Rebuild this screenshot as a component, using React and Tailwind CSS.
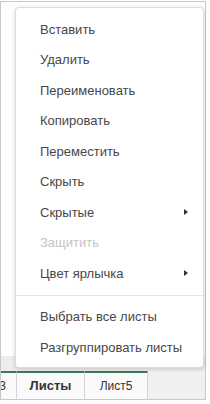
import React from "react";

const items = [
  { t: "Вставить" },
  { t: "Удалить" },
  { t: "Переименовать" },
  { t: "Копировать" },
  { t: "Переместить" },
  { t: "Скрыть" },
  { t: "Скрытые", sub: true },
  { t: "Защитить", disabled: true },
  { t: "Цвет ярлычка", sub: true },
];

function Row({ t, sub, disabled }) {
  return (
    <div
      className={
        "h-[30.5px] flex items-center pl-[24px] pr-[15px] justify-between " +
        (disabled ? "text-[#c4c4c4]" : "text-[#474747]")
      }
    >
      <span>{t}</span>
      {sub && (
        <svg width="4" height="6" viewBox="0 0 4 6">
          <path d="M0 0 L4 3 L0 6 Z" fill="#333" />
        </svg>
      )}
    </div>
  );
}

export default function App() {
  return (
    <div
      className="relative w-[210px] h-[404px] bg-white"
      style={{ fontFamily: '"Liberation Sans", Arial, sans-serif' }}
    >
      <div className="mt-[1px] w-[206px] h-[399px] border border-[#c8c8c8] flex flex-col">
        <div className="flex-1 bg-white" />
        <div className="h-[15px] bg-[#ededed]" />
        <div className="h-[28px] flex bg-[#f0f0f0] text-[12px] text-[#333]">
          <div className="w-[16px] bg-[#fafafa] border-t-[2px] border-[#3f7a56] border-r border-r-[#d4d4d4] flex items-center justify-end overflow-hidden">
            <span className="pr-[10px]">3</span>
          </div>
          <div className="w-[68px] bg-[#fafafa] border-t-[2px] border-[#3f7a56] border-r border-r-[#d4d4d4] flex items-center justify-center font-bold text-[13px]">
            Листы
          </div>
          <div className="w-[63px] bg-[#fafafa] border-t-[2px] border-[#3f7a56] border-r border-r-[#d4d4d4] flex items-center justify-center">
            Лист5
          </div>
        </div>
      </div>

      <div className="absolute left-[15px] top-[6px] w-[189px] h-[361px] bg-white rounded-[4px] border border-[#dcdcdc] shadow-[0_1px_4px_rgba(0,0,0,0.18)] pt-[6px] text-[13px]">
        {items.map((it) => (
          <Row key={it.t} {...it} />
        ))}
        <div className="my-[6px] h-px bg-[#e4e4e4]" />
        <Row t="Выбрать все листы" />
        <Row t="Разгруппировать листы" />
      </div>
    </div>
  );
}
